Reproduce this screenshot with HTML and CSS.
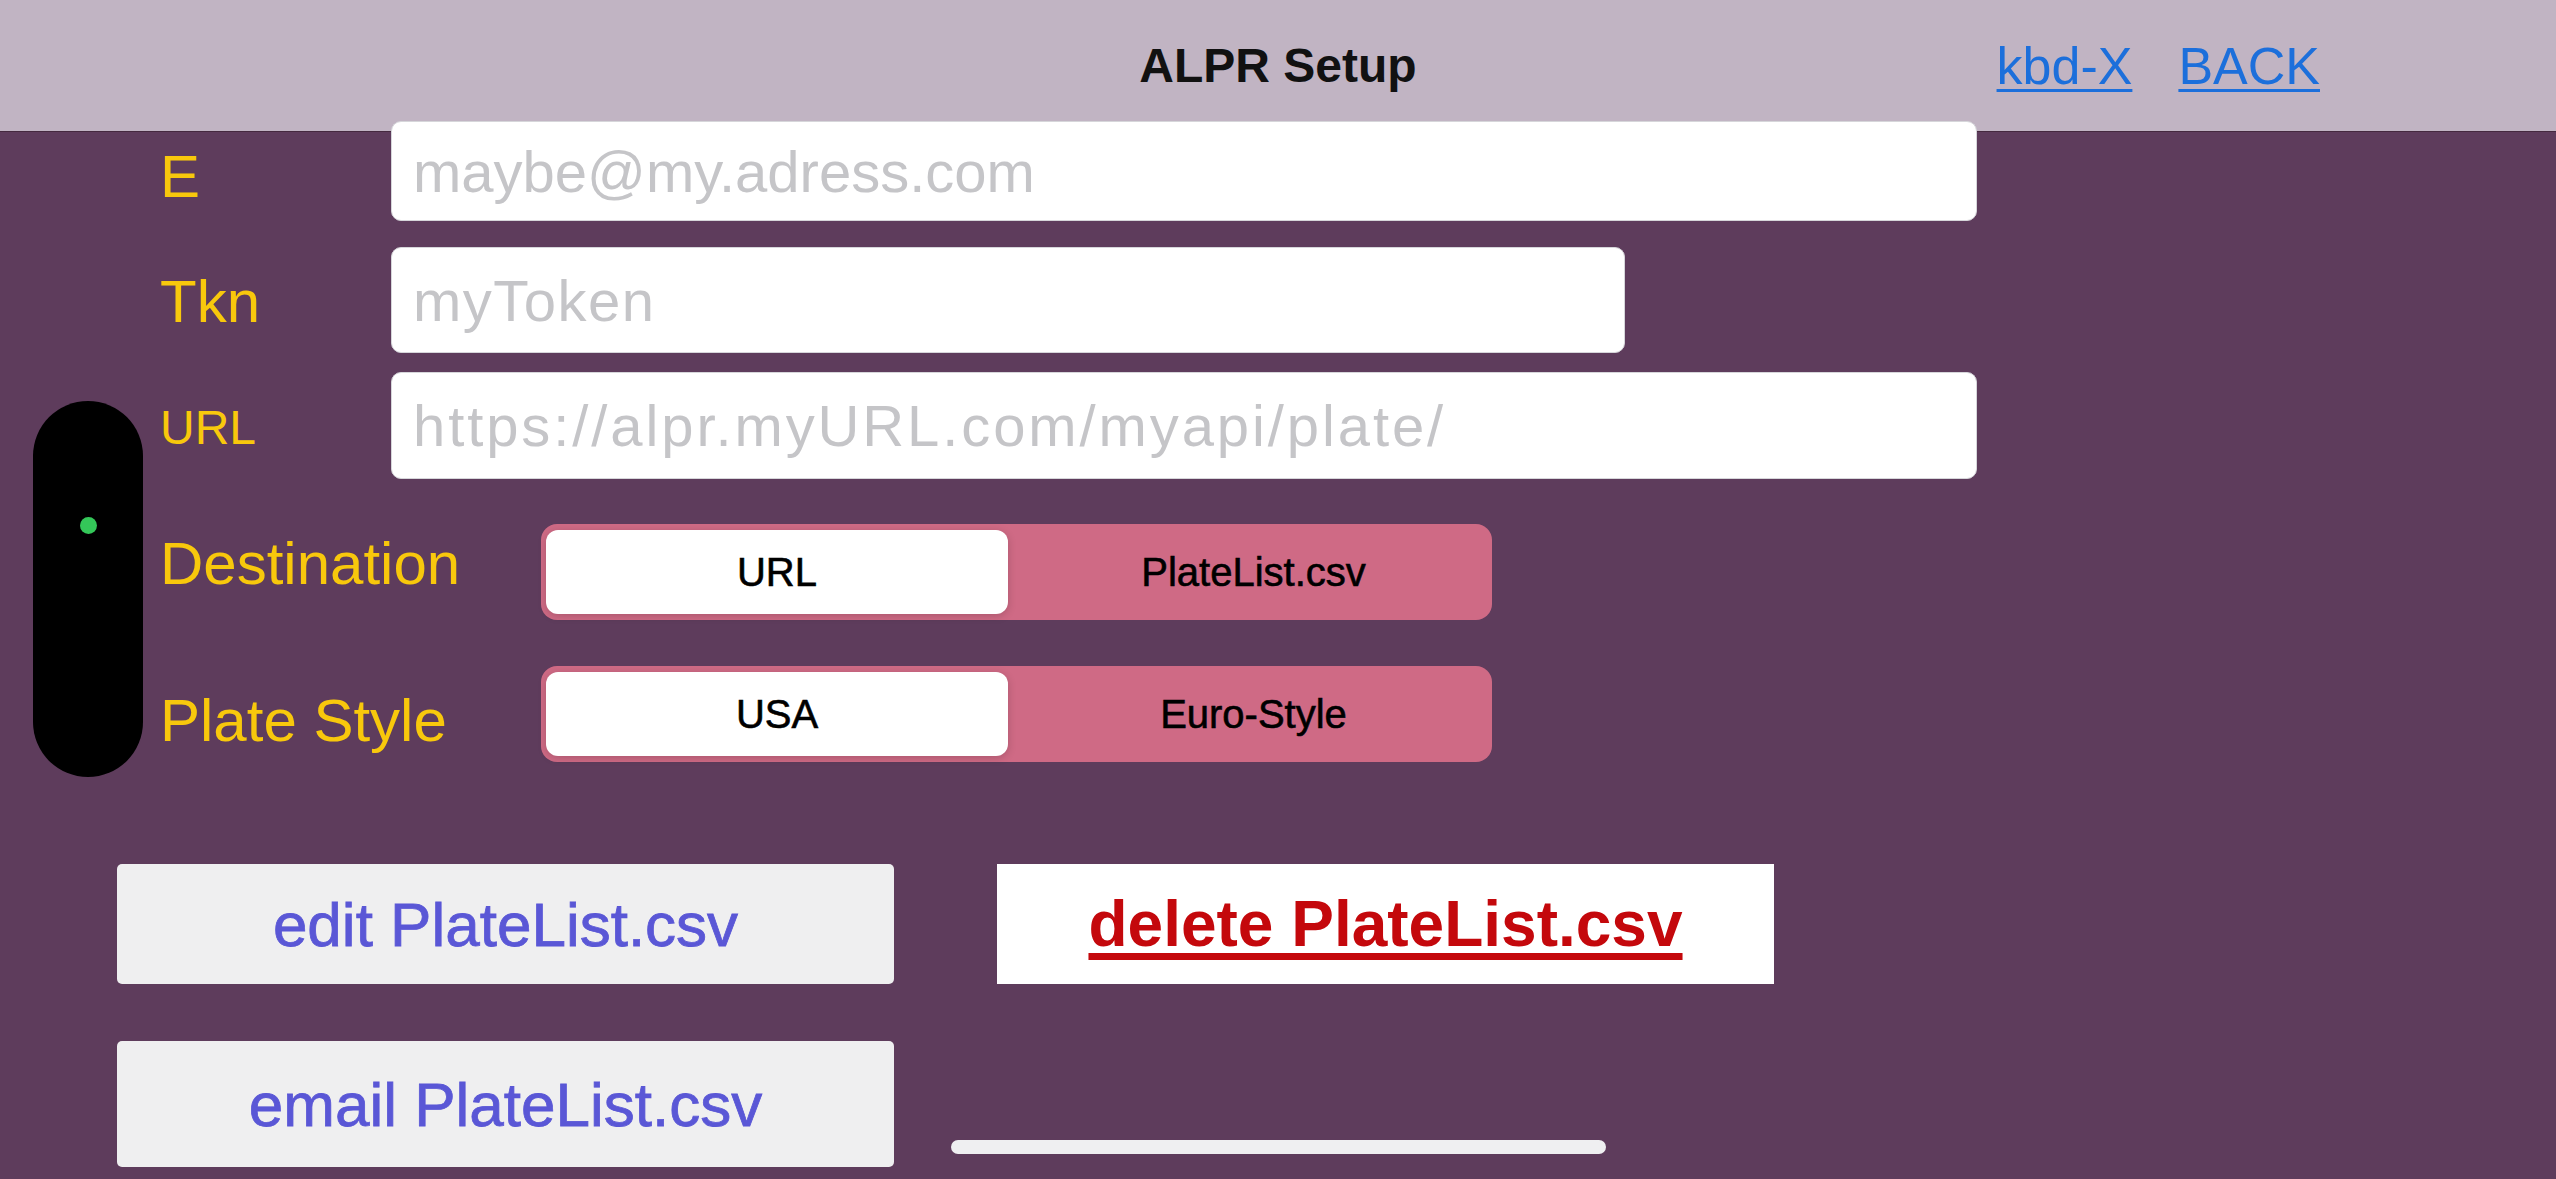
FILE: index.html
```html
<!DOCTYPE html>
<html lang="en">
<head>
  <meta charset="UTF-8" />
  <meta name="viewport" content="width=device-width, initial-scale=1.0"/>
  <title>ALPR Setup</title>
  <link rel="stylesheet" href="styles.css">
</head>
<body>
  <div class="topbar">
    <div></div>
    <h1 class="title">ALPR Setup</h1>
    <div class="links">
      <a href="#">kbd-X</a>
      <a href="#">BACK</a>
    </div>
  </div>

  <div class="cam-pill"><span class="cam-dot"></span></div>

  <div class="content">
    <div class="fields">
      <div class="row">
        <label class="label label-e" for="email">E</label>
        <input class="field field-wide field-short" type="email" id="email" placeholder="maybe@my.adress.com">
      </div>
      <div class="row row-tkn">
        <label class="label label-tkn" for="token">Tkn</label>
        <input class="field field-mid" type="text" id="token" placeholder="myToken">
      </div>
      <div class="row row-url">
        <label class="label label-small" for="url">URL</label>
        <input class="field field-wide field-url" type="text" id="url" placeholder="https://alpr.myURL.com/myapi/plate/">
      </div>
    </div>

    <div class="toggles">
      <div class="row">
        <div class="label label-wide label-up">Destination</div>
        <div class="segmented">
          <div class="seg seg-on">URL</div>
          <div class="seg">PlateList.csv</div>
        </div>
      </div>
      <div class="row">
        <div class="label label-wide label-down">Plate Style</div>
        <div class="segmented">
          <div class="seg seg-on">USA</div>
          <div class="seg">Euro-Style</div>
        </div>
      </div>
    </div>

    <div class="actions">
      <button class="btn">edit PlateList.csv</button>
      <button class="btn btn-danger">delete PlateList.csv</button>
      <button class="btn btn-tall">email PlateList.csv</button>
    </div>
  </div>

  <div class="home-bar"></div>
</body>
</html>
```

FILE: styles.css
```css
html, body {
  margin: 0;
  padding: 0;
}

body {
  width: 2556px;
  height: 1179px;
  overflow: hidden;
  position: relative;
  background: #5e3c5c;
  font-family: 'Liberation Sans', Arial, sans-serif;
}

.topbar {
  height: 131px;
  background: #c1b4c3;
  border-bottom: 1px solid #45293f;
  display: grid;
  grid-template-columns: 1fr auto 1fr;
  align-items: center;
}

.title {
  margin: 0;
  font-size: 48px;
  line-height: 1;
  font-weight: bold;
  color: #111;
}

.links {
  display: flex;
  justify-content: flex-end;
  gap: 46px;
  padding-right: 236px;
}

.links a {
  font-size: 52px;
  line-height: 1;
  color: #1c6fdb;
  text-decoration: underline;
  text-decoration-thickness: 3px;
  text-underline-offset: 5px;
}

.content {
  position: relative;
  margin-top: -11px;
}

.fields {
  display: flex;
  flex-direction: column;
  gap: 23px;
  padding-left: 160px;
}

.row-tkn {
  margin-top: 3px;
}

.row-url {
  margin-top: -4px;
}

.row {
  display: flex;
  align-items: center;
}

.label {
  width: 231px;
  font-size: 60px;
  line-height: 1;
  color: #f8c80c;
}

.label-small {
  font-size: 48px;
  padding-top: 4px;
}

.label-e {
  padding-top: 11px;
}

.label-tkn {
  padding-top: 3px;
}

.label-wide {
  width: 381px;
}

.label-up {
  padding-bottom: 17px;
}

.label-down {
  padding-top: 13px;
}

.field {
  box-sizing: border-box;
  height: 106px;
  padding: 0 21px;
  border: 1px solid #d6d6da;
  border-radius: 10px;
  background: #fff;
  font-family: 'Liberation Sans', Arial, sans-serif;
  font-size: 58px;
  letter-spacing: 0.5px;
  color: #222;
  outline: none;
}

.field::placeholder {
  color: #c5c5c8;
}

.field-wide {
  width: 1586px;
}

.field-short {
  height: 100px;
  letter-spacing: 0;
}

.field-mid {
  width: 1234px;
  letter-spacing: 1.5px;
}

.field-url {
  height: 107px;
  letter-spacing: 2.9px;
}

.toggles {
  display: flex;
  flex-direction: column;
  gap: 46px;
  margin-top: 45px;
  padding-left: 160px;
}

.segmented {
  box-sizing: border-box;
  width: 951px;
  height: 96px;
  padding: 6px 5px;
  border-radius: 16px;
  background: #cf6a85;
  display: flex;
}

.seg {
  flex: 1;
  display: flex;
  align-items: center;
  justify-content: center;
  padding-left: 12px;
  font-size: 40px;
  color: #000;
  -webkit-text-stroke: 0.6px #000;
}

.seg-on {
  flex: 0 0 462px;
  padding-left: 0;
  background: #fff;
  border-radius: 12px;
  box-shadow: 0 2px 8px rgba(0, 0, 0, 0.18);
}

.actions {
  display: grid;
  grid-template-columns: 777px 777px;
  column-gap: 103px;
  row-gap: 57px;
  margin-top: 102px;
  padding-left: 117px;
}

.btn {
  height: 120px;
  border: none;
  border-radius: 5px;
  background: #efeff0;
  color: #5a57d6;
  font-family: 'Liberation Sans', Arial, sans-serif;
  font-size: 62px;
  -webkit-text-stroke: 0.8px #5a57d6;
  cursor: pointer;
}

.btn-tall {
  height: 126px;
}

.btn-danger {
  background: #fff;
  border-radius: 0;
  color: #c4080c;
  font-size: 64px;
  font-weight: bold;
  -webkit-text-stroke: 0;
  text-decoration: underline;
  text-decoration-thickness: 7px;
  text-underline-offset: 7px;
}

.cam-pill {
  position: absolute;
  left: 33px;
  top: 401px;
  width: 110px;
  height: 376px;
  border-radius: 55px;
  background: #000;
  z-index: 2;
}

.cam-dot {
  position: absolute;
  left: 47px;
  top: 116px;
  width: 17px;
  height: 17px;
  border-radius: 50%;
  background: #34c759;
}

.home-bar {
  position: absolute;
  left: 951px;
  top: 1140px;
  width: 655px;
  height: 14px;
  border-radius: 7px;
  background: #efeff1;
}
```
